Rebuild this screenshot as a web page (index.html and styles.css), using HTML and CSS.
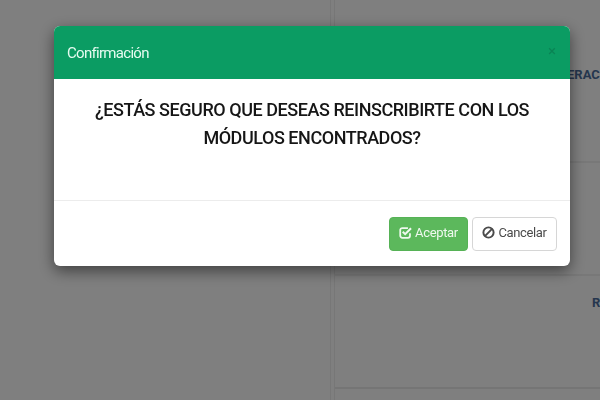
FILE: index.html
```html
<!DOCTYPE html>
<html lang="es">
  <head>
    <meta charset="UTF-8" />
    <meta name="viewport" content="width=device-width, initial-scale=1.0" />
    <title>Confirmación</title>
    <link rel="stylesheet" href="styles.css">
  </head>
  <body>
    <div class="page">
      <div class="col-left"></div>
      <div class="col-right">
        <div class="row row-first"></div>
        <div class="row row-second"><span class="row-text">ERAC</span></div>
        <div class="row row-third"></div>
        <div class="row row-fourth"><span class="row-text">R</span></div>
        <div class="row row-last"></div>
      </div>
    </div>

    <div class="backdrop">
      <div class="modal">
        <div class="modal-header">
          <h4 class="modal-title">Confirmación</h4>
          <span class="close">×</span>
        </div>
        <div class="modal-body">
          <p>¿ESTÁS SEGURO QUE DESEAS REINSCRIBIRTE CON LOS MÓDULOS ENCONTRADOS?</p>
        </div>
        <div class="modal-footer">
          <button class="btn btn-success">
            <svg class="icon" viewBox="0 0 16 16" aria-hidden="true">
              <path d="M13.5 9V12a2.5 2.5 0 0 1-2.5 2.5H4A2.5 2.5 0 0 1 1.5 12V5A2.5 2.5 0 0 1 4 2.5h7" fill="none" stroke="currentColor" stroke-width="2.2"/>
              <path d="M4.6 7L7.6 10L14.8 2.8" fill="none" stroke="currentColor" stroke-width="2.6"/>
            </svg>
            Aceptar
          </button>
          <button class="btn btn-default">
            <svg class="icon" viewBox="0 0 16 16" aria-hidden="true">
              <circle cx="8" cy="8" r="6.3" fill="none" stroke="currentColor" stroke-width="2.4"/>
              <path d="M3.6 12.4L12.4 3.6" fill="none" stroke="currentColor" stroke-width="2.4"/>
            </svg>
            Cancelar
          </button>
        </div>
      </div>
    </div>
  </body>
</html>
```

FILE: styles.css
```css
* {
  margin: 0;
  padding: 0;
  box-sizing: border-box;
  font-family: Roboto, "Liberation Sans", sans-serif;
}

html,
body {
  height: 100%;
  overflow: hidden;
}

body {
  background-color: #fff;
}

/* Page behind the modal */
.page {
  display: flex;
  height: 400px;
}

.col-left {
  width: 331px;
  border-right: 1px solid #eee;
}

.col-right {
  flex: 1;
  min-width: 0;
  margin-left: 3px;
  border-left: 1px solid #eee;
  overflow: hidden;
}

.row {
  border-bottom: 2px solid #f0f0f0;
  white-space: nowrap;
  font-size: 13px;
  font-weight: 700;
  color: #4a6d9c;
}

.row-first {
  height: 51px;
  border-bottom: none;
}

.row-second {
  height: 112px;
  padding: 16px 0 0 232px;
}

.row-third {
  height: 113px;
}

.row-fourth {
  height: 113px;
  padding: 19px 0 0 257px;
  border-bottom-color: #ebebeb;
}

.row-last {
  height: 11px;
  border-bottom: none;
}

/* Modal */
.backdrop {
  position: fixed;
  inset: 0;
  background-color: rgba(0, 0, 0, 0.5);
  padding: 26px 0 0 54px;
}

.modal {
  width: 516px;
  height: 240px;
  background-color: #fff;
  border-radius: 6px;
  overflow: hidden;
  box-shadow: 0 5px 15px rgba(0, 0, 0, 0.5);
}

.modal-header {
  display: flex;
  justify-content: space-between;
  align-items: center;
  height: 53px;
  padding: 0 13px;
  background-color: #0b9c63;
}

.modal-title {
  font-size: 15px;
  font-weight: 400;
  letter-spacing: -0.7px;
  color: #e6fbf0;
}

.close {
  font-size: 15px;
  font-weight: 400;
  line-height: 1;
  color: #0a8455;
  margin-top: -3px;
  margin-right: 1px;
}

.modal-body {
  height: 122px;
  padding: 17px 30px 0;
  text-align: center;
  border-bottom: 1px solid #ececec;
}

.modal-body p {
  font-size: 18px;
  font-weight: 500;
  letter-spacing: -0.45px;
  line-height: 28px;
  color: #161616;
}

.modal-footer {
  display: flex;
  justify-content: flex-end;
  gap: 4px;
  padding: 16px 13px 0 0;
}

.btn {
  display: flex;
  align-items: center;
  justify-content: center;
  gap: 3px;
  height: 34px;
  padding-bottom: 3px;
  font-size: 13px;
  letter-spacing: -0.35px;
  border-radius: 4px;
  border: 1px solid transparent;
}

.btn-success {
  width: 79px;
  background-color: #5cb85c;
  border-color: #56b256;
  color: #eef8ee;
}

.btn-default {
  width: 85px;
  background-color: #fff;
  border-color: #d6d6d6;
  color: #4a4a4a;
}

.icon {
  width: 13px;
  height: 13px;
}
```
